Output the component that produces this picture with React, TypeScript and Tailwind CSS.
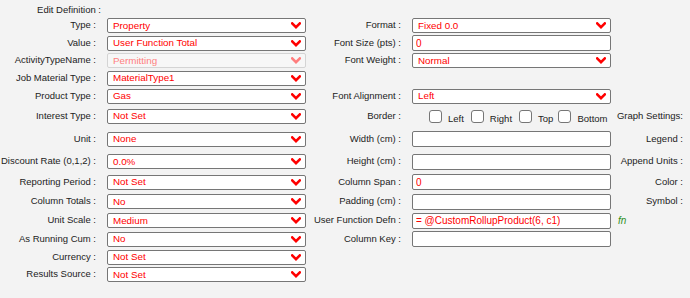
import React from "react";

type SelectProps = { value: string; disabled?: boolean };

function Chevron({ disabled }: { disabled?: boolean }) {
  return (
    <svg width="10" height="7" viewBox="0 0 10 7" className="shrink-0">
      <polyline
        points="1.2,1.4 5,5.2 8.8,1.4"
        fill="none"
        stroke={disabled ? "#ff7d7d" : "#ff0000"}
        strokeWidth="2.5"
        strokeLinecap="square"
      />
    </svg>
  );
}

function Select({ value, disabled }: SelectProps) {
  return (
    <div
      className={
        disabled
          ? "h-[15px] w-[199px] flex items-center justify-between pl-[5px] pr-[4px] rounded-[2px] border border-[#d4d4d4] bg-[#f7f7f7] text-[#ff8080] text-[9.8px]"
          : "h-[15px] w-[199px] flex items-center justify-between pl-[5px] pr-[4px] rounded-[2px] border border-[#767676] bg-white text-[#ff0000] text-[9.8px]"
      }
    >
      <span className="leading-none">{value}</span>
      <Chevron disabled={disabled} />
    </div>
  );
}

function TextBox({ value = "" }: { value?: string }) {
  return (
    <input
      readOnly
      value={value}
      className="h-[16px] w-[199px] px-[3px] rounded-[2px] border border-[#767676] bg-white text-[#ff0000] text-[10px] leading-none outline-none"
    />
  );
}

function Check({ label, gap }: { label: string; gap: string }) {
  return (
    <div className={"flex items-center " + gap}>
      <div className="w-[13px] h-[13px] rounded-[3px] border border-[#767676] bg-white" />
      <span className="ml-[6px] mt-[6px] leading-none">{label}</span>
    </div>
  );
}

type RowProps = {
  h: string;
  label?: string;
  left?: React.ReactNode;
  label2?: string;
  right?: React.ReactNode;
  label3?: React.ReactNode;
};

function Row({ h, label, left, label2, right, label3 }: RowProps) {
  return (
    <div className={"flex items-center " + h}>
      <div className="w-[96px] text-right whitespace-nowrap">{label}</div>
      <div className="ml-[11px] w-[199px]">{left}</div>
      <div className="w-[95px] text-right whitespace-nowrap">{label2}</div>
      <div className="ml-[11px] w-[199px]">{right}</div>
      <div className="flex-1 pr-[7px] text-right whitespace-nowrap">{label3}</div>
    </div>
  );
}

export default function App() {
  return (
    <div
      className="w-[690px] h-[298px] bg-[#f3f3f3] text-[#222] text-[9.5px] overflow-hidden"
      style={{ fontFamily: '"Liberation Sans", Arial, sans-serif' }}
    >
      <div className="h-[17px] flex items-center pt-[4px]">
        <div className="w-[101px] text-right">Edit Definition :</div>
      </div>

      <Row h="h-[17px]" label="Type :" left={<Select value="Property" />} label2="Format :" right={<Select value="Fixed 0.0" />} />
      <Row h="h-[18px]" label="Value :" left={<Select value="User Function Total" />} label2="Font Size (pts) :" right={<TextBox value="0" />} />
      <Row h="h-[17px]" label="ActivityTypeName :" left={<Select value="Permitting" disabled />} label2="Font Weight :" right={<Select value="Normal" />} />
      <Row h="h-[18px]" label="Job Material Type :" left={<Select value="MaterialType1" />} />
      <Row h="h-[18px]" label="Product Type :" left={<Select value="Gas" />} label2="Font Alignment :" right={<Select value="Left" />} />

      <div className="flex items-center h-[22px]">
        <div className="w-[96px] text-right">Interest Type :</div>
        <div className="ml-[11px] w-[199px]">
          <Select value="Not Set" />
        </div>
        <div className="w-[95px] text-right">Border :</div>
        <div className="ml-[28px] flex items-center">
          <Check label="Left" gap="" />
          <Check label="Right" gap="ml-[7px]" />
          <Check label="Top" gap="ml-[7px]" />
          <Check label="Bottom" gap="ml-[5px]" />
        </div>
        <div className="flex-1 pr-[7px] text-right whitespace-nowrap">Graph Settings:</div>
      </div>

      <Row h="h-[24px]" label="Unit :" left={<Select value="None" />} label2="Width (cm) :" right={<TextBox />} label3="Legend :" />
      <Row h="h-[21px]" label="Discount Rate (0,1,2) :" left={<Select value="0.0%" />} label2="Height (cm) :" right={<TextBox />} label3="Append Units :" />
      <Row h="h-[20px]" label="Reporting Period :" left={<Select value="Not Set" />} label2="Column Span :" right={<TextBox value="0" />} label3="Color :" />
      <Row h="h-[19px]" label="Column Totals :" left={<Select value="No" />} label2="Padding (cm) :" right={<TextBox />} label3="Symbol :" />
      <Row
        h="h-[19px]"
        label="Unit Scale :"
        left={<Select value="Medium" />}
        label2="User Function Defn :"
        right={<TextBox value="= @CustomRollupProduct(6, c1)" />}
        label3={<span className="block text-left pl-[7px] italic text-[#2f8f24] text-[10px]">fn</span>}
      />
      <Row h="h-[18px]" label="As Running Cum :" left={<Select value="No" />} label2="Column Key :" right={<TextBox />} />
      <Row h="h-[18px]" label="Currency :" left={<Select value="Not Set" />} />
      <Row h="h-[17px]" label="Results Source :" left={<Select value="Not Set" />} />
    </div>
  );
}
